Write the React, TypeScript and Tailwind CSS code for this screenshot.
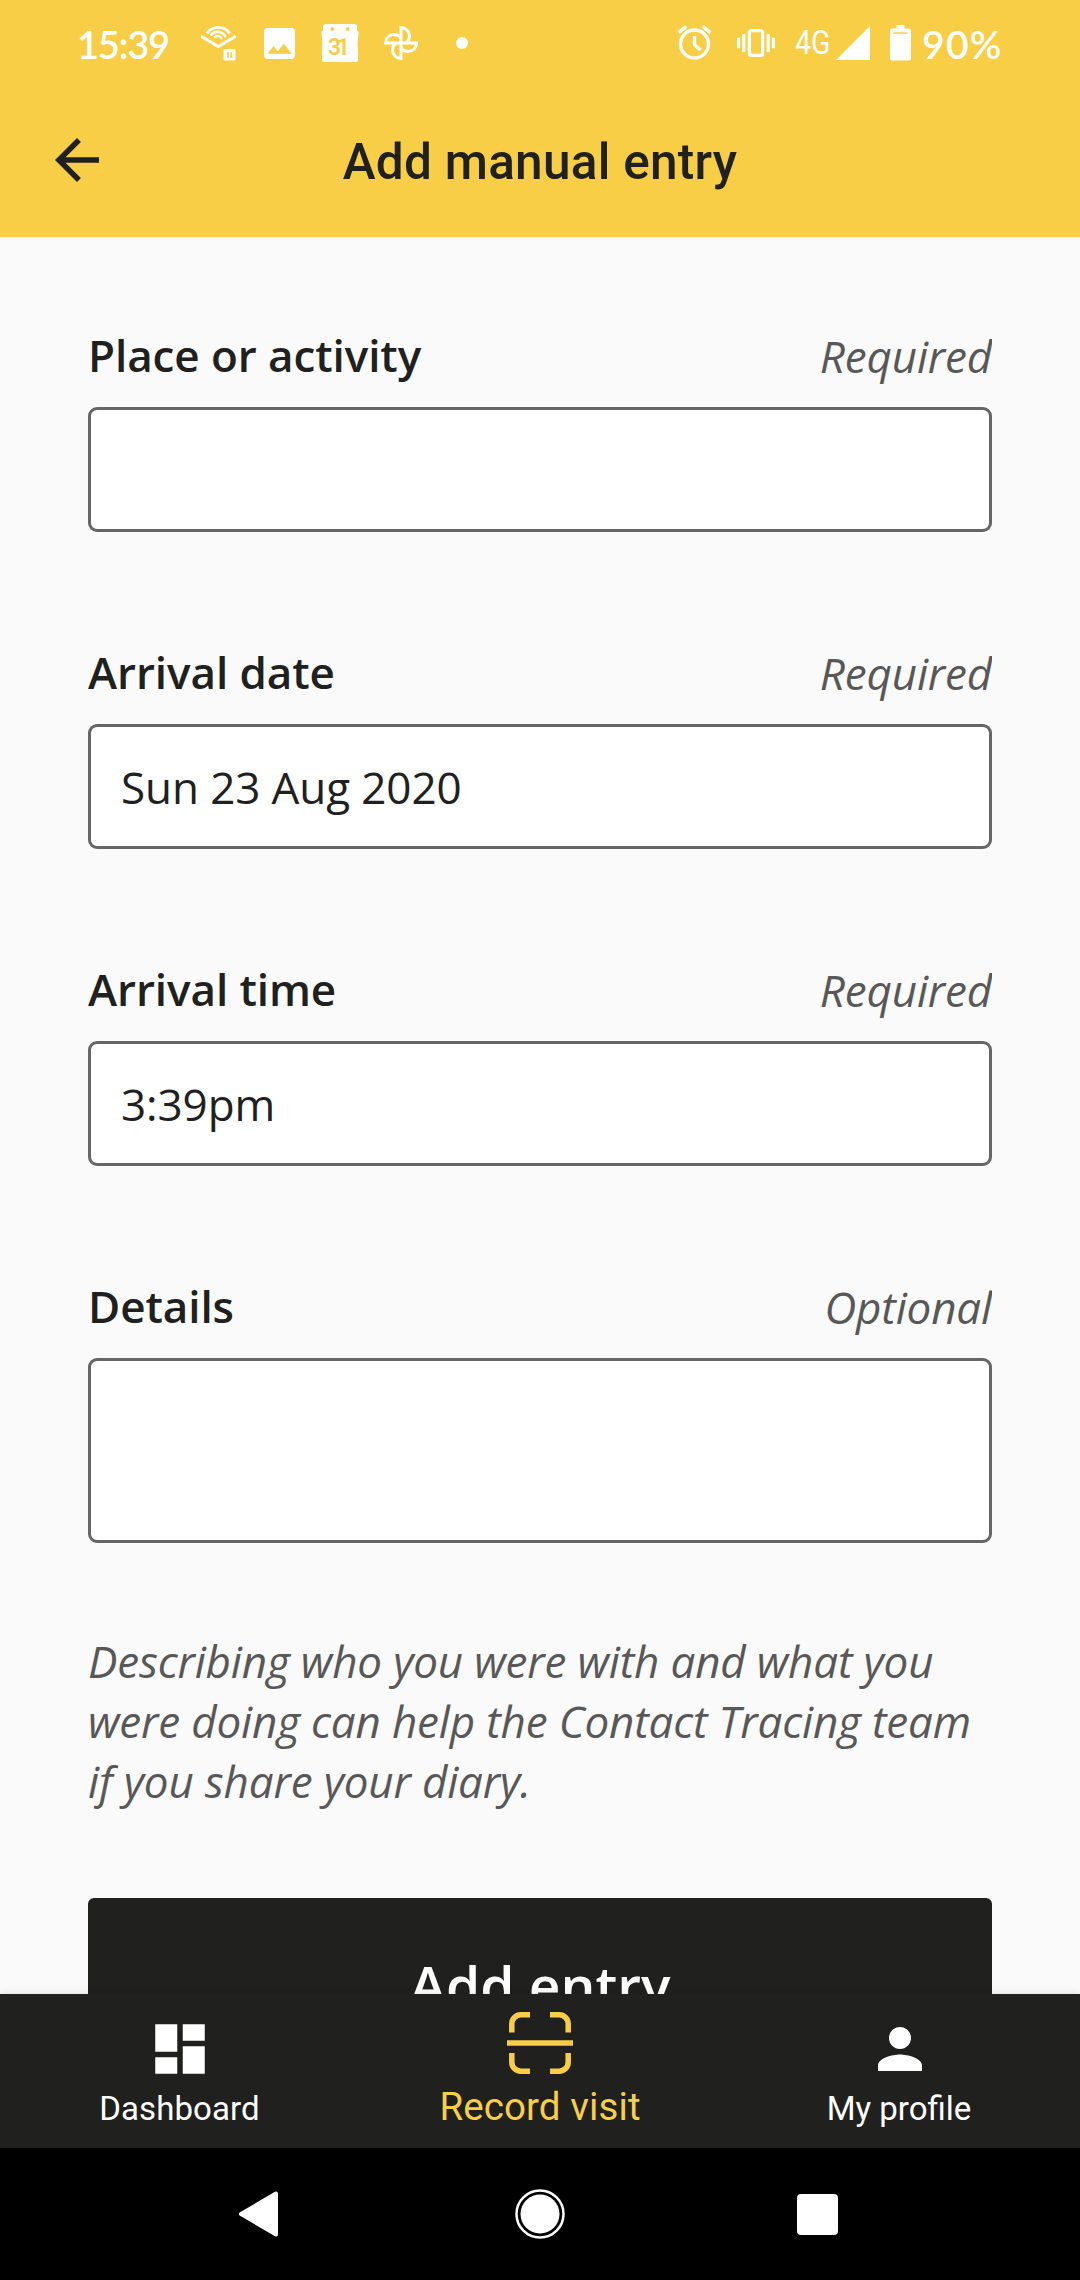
import React from "react";
import { MdArrowBack, MdDashboard, MdPerson } from "react-icons/md";

function StatusBar() {
  return (
    <div className="flex h-[83px] items-center pt-[3px] text-white">
      <span className="ml-[77px] w-[95px] pt-[2px] whitespace-nowrap font-['Lato'] text-[38px] leading-[44px] font-semibold tracking-[-1.2px]">15:39</span>
      <svg className="ml-[29px] h-[44px] w-[35px]" viewBox="0 0 35 44" fill="none" stroke="currentColor">
        <path d="M0 15.2 17.300 25.500 34.700 15.200" strokeWidth="3" />
        <path d="M6 12.300C12 4.500 23 4.500 28.700 12.300" strokeWidth="2.800" />
        <path d="M9.500 14.500C14 9 21 9.500 24.700 16" strokeWidth="2.600" />
        <path d="M13.500 16.500C16 13.800 19 14.200 21 18" strokeWidth="2.400" />
        <path d="M24 28h9a1.500 1.500 0 0 1 1.500 1.500v8.500a1.500 1.500 0 0 1-1.500 1.500h-9a1.500 1.500 0 0 1-1.500-1.500v-8.500a1.500 1.500 0 0 1 1.500-1.500zm2.200 3v6h1.600v-6zm3.200 0v6h1.600v-6z" fill="currentColor" fillRule="evenodd" stroke="none" />
      </svg>
      <svg className="ml-[28px] h-[31px] w-[31px]" viewBox="3 3 18 18" fill="currentColor">
        <path d="M21 19V5c0-1.100-.9-2-2-2H5c-1.100 0-2 .9-2 2v14c0 1.100.9 2 2 2h14c1.100 0 2-.9 2-2zM8.500 13.500l2.500 3.010L14.500 12l4.500 6H5l3.500-4.500z" />
      </svg>
      <svg className="ml-[26px] h-[38px] w-[38px]" viewBox="0 0 38 38">
        <path d="M4 0h30q2 0 2 2.500v3q0 2 1.600 2-1.600 11-.6 22v6.500q0 2-2 2H3q-2 0-2-2v-6.500q1-11-.6-22 1.600 0 1.600-2v-3Q2 0 4 0z" fill="currentColor" />
        <circle cx="11.300" cy="5" r="1.900" fill="#f8ce46" />
        <circle cx="26.700" cy="5" r="1.900" fill="#f8ce46" />
        <text x="18" y="30.700" textAnchor="middle" fill="#f8ce46" className="font-['Roboto'] text-[23px] font-semibold" textLength="22">31</text>
      </svg>
      <svg className="ml-[24px] h-[36px] w-[36px]" viewBox="0 0 36 36" fill="none" stroke="currentColor" strokeWidth="3">
        <path d="M18 18V2.500a8.500 8.500 0 0 1 8.500 8.500c0 3-1.200 5.300-3.500 7.300" />
        <path d="M18 18h15.500a8.500 8.500 0 0 1-8.500 8.500c-3 0-5.300-1.200-7-3.500" />
        <path d="M18 18v15.500a8.500 8.500 0 0 1-8.500-8.500c0-3 1.200-5.300 3.500-7" />
        <path d="M18 18H2.500A8.500 8.500 0 0 1 11 9.500c3 0 5.300 1.200 7 3.500" />
      </svg>
      <span className="ml-[37px] h-3 w-3 rounded-full bg-white" />
      <svg className="ml-[209px] h-[36px] w-[36px]" viewBox="0 0 36 36" fill="none" stroke="currentColor" strokeWidth="3.400">
        <circle cx="17.500" cy="19" r="14" />
        <path d="M1.700 7.600 9.300 1.400M25.700 1.400l7.600 6.200M17.500 11v8.500l6 5.800" />
      </svg>
      <svg className="ml-[24px] h-[28px] w-[38px]" viewBox="0 0 38 28" fill="currentColor">
        <rect x="12.400" y="1.700" width="13.200" height="24.600" rx="1.500" fill="none" stroke="currentColor" strokeWidth="3.300" />
        <path d="M0 8.800h3.200v10.400H0zM5.200 5h3.200v18H5.200zM29.600 5h3.200v18h-3.200zM34.800 8.800H38v10.400h-3.200z" />
      </svg>
      <span className="ml-[20px] w-[36px] whitespace-nowrap font-['Roboto'] text-[33px] leading-[44px]">
        <span className="inline-block origin-left scale-x-[0.86]">4G</span>
      </span>
      <svg className="ml-[5px] h-[34px] w-[34px]" viewBox="0 0 34 34" fill="currentColor"><path d="M34 0v34H0z" /></svg>
      <svg className="ml-[20px] h-[36px] w-[21px]" viewBox="0 0 21 36">
        <path d="M6.500 0h8v3.500H19q2 0 2 2V33.500q0 2-2 2H2q-2 0-2-2V5.500q0-2 2-2h4.500z" fill="currentColor" />
        <path d="M3.500 8h14" stroke="#f8ce46" strokeWidth="1.500" />
      </svg>
      <span className="ml-[11px] pt-[2px] whitespace-nowrap font-['Lato'] text-[39px] leading-[44px] font-semibold tracking-[1.3px]">90%</span>
    </div>
  );
}

type FieldProps = { label: string; hint: string; value?: string; boxClass?: string };

function Field({ label, hint, value, boxClass = "h-[125px]" }: FieldProps) {
  return (
    <div>
      <div className="flex h-[83px] items-start justify-between overflow-hidden text-[44px] leading-[60px]">
        <label className="pt-[1px] font-semibold tracking-[-0.08px]">{label}</label>
        <span className="pt-[2px] tracking-[-0.18px] text-[#585858] italic">{hint}</span>
      </div>
      <div className={`flex items-center rounded-[9px] border-[3px] border-[#666] bg-white px-[30px] text-[44px] leading-[60px] tracking-[-0.1px] ${boxClass}`}>
        {value}
      </div>
    </div>
  );
}

function ScanIcon() {
  return (
    <svg className="h-[66px] w-[66px]" viewBox="0 0 66 66" fill="none" stroke="currentColor" strokeWidth="5.500">
      <path d="M4.800 22.500V13.800a9 9 0 0 1 9-9H23M43 4.800h9.200a9 9 0 0 1 9 9v8.700M61.200 43v9.200a9 9 0 0 1-9 9H43M23 61.200h-9.200a9 9 0 0 1-9-9V43M0 33h66" />
    </svg>
  );
}

export default function App() {
  return (
    <div className="flex h-[2280px] w-[1080px] flex-col overflow-hidden bg-[#fafafa] font-['Open_Sans',sans-serif] text-[#20211f]">
      <header className="h-[237px] shrink-0 bg-[#f8ce46]">
        <StatusBar />
        <div className="grid h-[154px] grid-cols-[1fr_auto_1fr] items-center">
          <MdArrowBack className="ml-[44px] h-[66px] w-[66px]" />
          <h1 className="pt-[4px] font-['Roboto'] text-[49.5px] leading-[60px] font-medium tracking-[0.27px]">Add manual entry</h1>
        </div>
      </header>

      <main className="flex h-[1757px] shrink-0 flex-col overflow-hidden px-[88px] pt-[87px]">
        <div className="flex flex-col gap-[109px]">
          <Field label="Place or activity" hint="Required" />
          <Field label="Arrival date" hint="Required" value="Sun 23 Aug 2020" />
          <Field label="Arrival time" hint="Required" value="3:39pm" />
          <Field label="Details" hint="Optional" boxClass="h-[185px]" />
        </div>
        <p className="mt-[88px] text-[44px] leading-[60px] tracking-[-0.18px] text-[#585858] italic">
          Describing who you were with and what you were doing can help the Contact Tracing team if you share your diary.
        </p>
        <button className="mt-[87px] flex h-[180px] w-full shrink-0 items-center justify-center rounded-[6px] bg-[#20211f] pb-[6px] text-[55px] leading-[76px] font-semibold text-white">
          Add entry
        </button>
      </main>

      <nav className="relative grid h-[154px] shrink-0 grid-cols-3 bg-[#20211f] font-['Roboto'] text-[33px] leading-[40px] text-white shadow-[0_0_8px_rgba(0,0,0,0.12)]">
        <div className="flex flex-col items-center pt-[22px]">
          <MdDashboard className="h-[66px] w-[66px]" />
          <span className="mt-[7px] mr-[1px] tracking-[0.1px]">Dashboard</span>
        </div>
        <div className="flex flex-col items-center pt-[16px] text-[38.5px] text-[#f8ce46]">
          <ScanIcon />
          <span className="mt-[11px] tracking-[0.1px]">Record visit</span>
        </div>
        <div className="flex flex-col items-center pt-[22px]">
          <MdPerson className="h-[66px] w-[66px]" />
          <span className="mt-[7px] mr-[2px]">My profile</span>
        </div>
      </nav>

      <div className="flex h-[132px] shrink-0 items-center bg-black text-white">
        <svg className="ml-[239px] h-[46px] w-[39px]" viewBox="0 0 39 46" fill="currentColor" stroke="currentColor" strokeWidth="4" strokeLinejoin="round">
          <path d="M2 23 37 2.500v41z" />
        </svg>
        <svg className="ml-[237px] h-[50px] w-[50px]" viewBox="0 0 50 50">
          <circle cx="25" cy="25" r="23.500" fill="none" stroke="currentColor" strokeWidth="2.500" />
          <circle cx="25" cy="25" r="19.500" fill="currentColor" />
        </svg>
        <span className="ml-[232px] h-[41px] w-[41px] rounded-[4px] bg-white" />
      </div>
    </div>
  );
}
